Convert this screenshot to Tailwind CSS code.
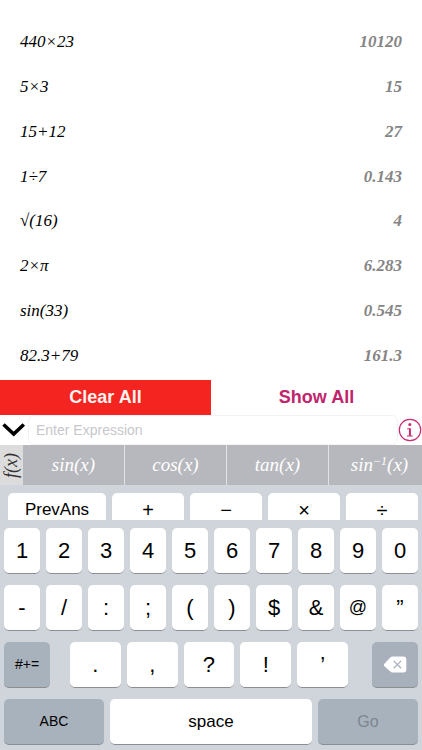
<!DOCTYPE html>
<html lang="en">
<head>
<meta charset="utf-8">
<meta name="viewport" content="width=device-width, initial-scale=1">
<title>Calculator</title>
<script src="https://cdn.jsdelivr.net/npm/@tailwindcss/browser@4"></script>
</head>
<body class="bg-white font-['Liberation_Sans',Arial,sans-serif] text-black">
<div class="flex min-h-screen flex-col overflow-hidden">

  <!-- History -->
  <ul class="flex flex-1 flex-col px-5 pt-5 pb-[2px] font-['Liberation_Serif',serif] text-[17px] italic leading-6">
    <li class="flex flex-1 items-center justify-between"><span>440×23</span><span class="font-bold text-[#858585]">10120</span></li>
    <li class="flex flex-1 items-center justify-between"><span>5×3</span><span class="font-bold text-[#858585]">15</span></li>
    <li class="flex flex-1 items-center justify-between"><span>15+12</span><span class="font-bold text-[#858585]">27</span></li>
    <li class="flex flex-1 items-center justify-between"><span>1÷7</span><span class="font-bold text-[#858585]">0.143</span></li>
    <li class="flex flex-1 items-center justify-between"><span>√(16)</span><span class="font-bold text-[#858585]">4</span></li>
    <li class="flex flex-1 items-center justify-between"><span>2×π</span><span class="font-bold text-[#858585]">6.283</span></li>
    <li class="flex flex-1 items-center justify-between"><span>sin(33)</span><span class="font-bold text-[#858585]">0.545</span></li>
    <li class="flex flex-1 items-center justify-between"><span>82.3+79</span><span class="font-bold text-[#858585]">161.3</span></li>
  </ul>

  <div class="grid h-[35px] grid-cols-2 text-[18px] font-bold">
    <button class="bg-[#f42521] text-[#fff1ef]">Clear All</button>
    <button class="bg-white text-[#c0246c]">Show All</button>
  </div>

  <!-- Expression entry -->
  <div class="flex h-[30px] items-center">
    <button aria-label="Hide keyboard" class="flex w-7 shrink-0 justify-center">
      <svg class="h-4 w-6" viewBox="0 0 24 16" fill="none" stroke="#000" stroke-width="3.6"><path d="M1.5 2.5 11.7 12 21.8 2.5"/></svg>
    </button>
    <input type="text" aria-label="Expression" placeholder="Enter Expression" class="h-[30px] min-w-0 flex-1 rounded-md border border-[#f3f3f5] bg-white px-[7px] text-[14px] placeholder:text-[#c7c7cc] outline-none">
    <button aria-label="Information" class="flex w-6 shrink-0 justify-center">
      <svg class="size-6" viewBox="0 0 24 24" fill="none"><circle cx="12" cy="12" r="10.7" stroke="#c82a70" stroke-width="1.2"/><circle cx="11.8" cy="6.6" r="1.5" fill="#c82a70"/><path d="M9.2 10.2h3.7v7.4h1.8v1H9v-1h1.9v-6.4H9.2z" fill="#c82a70"/></svg>
    </button>
  </div>

  <!-- Functions -->
  <div class="flex h-10 overflow-hidden bg-[#e3e3e6] font-['Liberation_Serif',serif] text-[19px] italic text-white">
    <button class="flex w-[23px] shrink-0 items-center justify-center bg-[#dcdcdd] text-[18px] text-[#333]"><span class="-rotate-90 whitespace-nowrap">f(x)</span></button>
    <div class="flex flex-1 gap-px">
      <button class="w-[101px] shrink-0 bg-[#b7b8bd]">sin(x)</button>
      <button class="w-[101px] shrink-0 bg-[#b7b8bd]">cos(x)</button>
      <button class="w-[101px] shrink-0 bg-[#b7b8bd]">tan(x)</button>
      <button class="w-[101px] shrink-0 bg-[#b7b8bd]">sin<sup class="text-[12px]">−1</sup>(x)</button>
    </div>
  </div>

  <!-- Keyboard -->
  <div class="bg-[#d0d4db] px-1 pt-2 pb-[5px] text-[22px]">
    <div class="flex h-[27px] gap-1.5 pl-1">
      <button class="w-[98px] shrink-0 rounded-t-[5px] bg-white pt-[7px] text-[17px] leading-5">PrevAns</button>
      <button class="flex-1 rounded-t-[5px] bg-white pt-[7px] text-[20px] leading-5">+</button>
      <button class="flex-1 rounded-t-[5px] bg-white pt-[7px] text-[20px] leading-5">−</button>
      <button class="flex-1 rounded-t-[5px] bg-white pt-[7px] text-[20px] leading-5">×</button>
      <button class="flex-1 rounded-t-[5px] bg-white pt-[7px] text-[20px] leading-5">÷</button>
    </div>
    <div class="mt-2 grid grid-cols-10 gap-x-1.5 gap-y-[11px]">
      <button class="h-[46px] rounded-[5px] border-b border-[#8b8d91] bg-white">1</button>
      <button class="h-[46px] rounded-[5px] border-b border-[#8b8d91] bg-white">2</button>
      <button class="h-[46px] rounded-[5px] border-b border-[#8b8d91] bg-white">3</button>
      <button class="h-[46px] rounded-[5px] border-b border-[#8b8d91] bg-white">4</button>
      <button class="h-[46px] rounded-[5px] border-b border-[#8b8d91] bg-white">5</button>
      <button class="h-[46px] rounded-[5px] border-b border-[#8b8d91] bg-white">6</button>
      <button class="h-[46px] rounded-[5px] border-b border-[#8b8d91] bg-white">7</button>
      <button class="h-[46px] rounded-[5px] border-b border-[#8b8d91] bg-white">8</button>
      <button class="h-[46px] rounded-[5px] border-b border-[#8b8d91] bg-white">9</button>
      <button class="h-[46px] rounded-[5px] border-b border-[#8b8d91] bg-white">0</button>
      <button class="h-[46px] rounded-[5px] border-b border-[#8b8d91] bg-white">-</button>
      <button class="h-[46px] rounded-[5px] border-b border-[#8b8d91] bg-white">/</button>
      <button class="h-[46px] rounded-[5px] border-b border-[#8b8d91] bg-white">:</button>
      <button class="h-[46px] rounded-[5px] border-b border-[#8b8d91] bg-white">;</button>
      <button class="h-[46px] rounded-[5px] border-b border-[#8b8d91] bg-white">(</button>
      <button class="h-[46px] rounded-[5px] border-b border-[#8b8d91] bg-white">)</button>
      <button class="h-[46px] rounded-[5px] border-b border-[#8b8d91] bg-white">$</button>
      <button class="h-[46px] rounded-[5px] border-b border-[#8b8d91] bg-white">&amp;</button>
      <button class="h-[46px] rounded-[5px] border-b border-[#8b8d91] bg-white text-[18px]">@</button>
      <button class="h-[46px] rounded-[5px] border-b border-[#8b8d91] bg-white">”</button>
    </div>
    <div class="mt-[11px] flex h-[46px]">
      <button class="w-[46px] shrink-0 rounded-[5px] border-b border-[#8b8d91] bg-[#a8b2bd] text-[14px]">#+=</button>
      <div class="mr-6 ml-5 flex flex-1 gap-1.5">
        <button class="flex-1 rounded-[5px] border-b border-[#8b8d91] bg-white">.</button>
        <button class="flex-1 rounded-[5px] border-b border-[#8b8d91] bg-white">,</button>
        <button class="flex-1 rounded-[5px] border-b border-[#8b8d91] bg-white">?</button>
        <button class="flex-1 rounded-[5px] border-b border-[#8b8d91] bg-white">!</button>
        <button class="flex-1 rounded-[5px] border-b border-[#8b8d91] bg-white">’</button>
      </div>
      <button aria-label="Delete" class="flex w-[46px] shrink-0 items-center justify-center rounded-[5px] border-b border-[#8b8d91] bg-[#a8b0bc]">
        <svg class="h-[18px] w-6" viewBox="0 0 24 18"><path d="M1.2 8 7 1.8Q8.3.5 10 .5h10.4Q23.3.5 23.3 3.4v10.2q0 2.9-2.9 2.9H10q-1.7 0-3-1.3L1.2 10Q.3 9 1.2 8z" fill="#fff"/><path d="m10.7 4.9 7.4 7.4m0-7.4-7.4 7.4" stroke="#a8b0bc" stroke-width="1.3"/></svg>
      </button>
    </div>
    <div class="mt-[11px] flex h-[46px] gap-1.5">
      <button class="w-[100px] shrink-0 rounded-[5px] border-b border-[#8b8d91] bg-[#a8b2bd] text-[14px]">ABC</button>
      <button class="flex-1 rounded-[5px] border-b border-[#8b8d91] bg-white text-[17px]">space</button>
      <button class="w-[100px] shrink-0 rounded-[5px] border-b border-[#8b8d91] bg-[#a8b2bd] text-[16px] text-[#7b858f]">Go</button>
    </div>
  </div>
</div>
</body>
</html>
